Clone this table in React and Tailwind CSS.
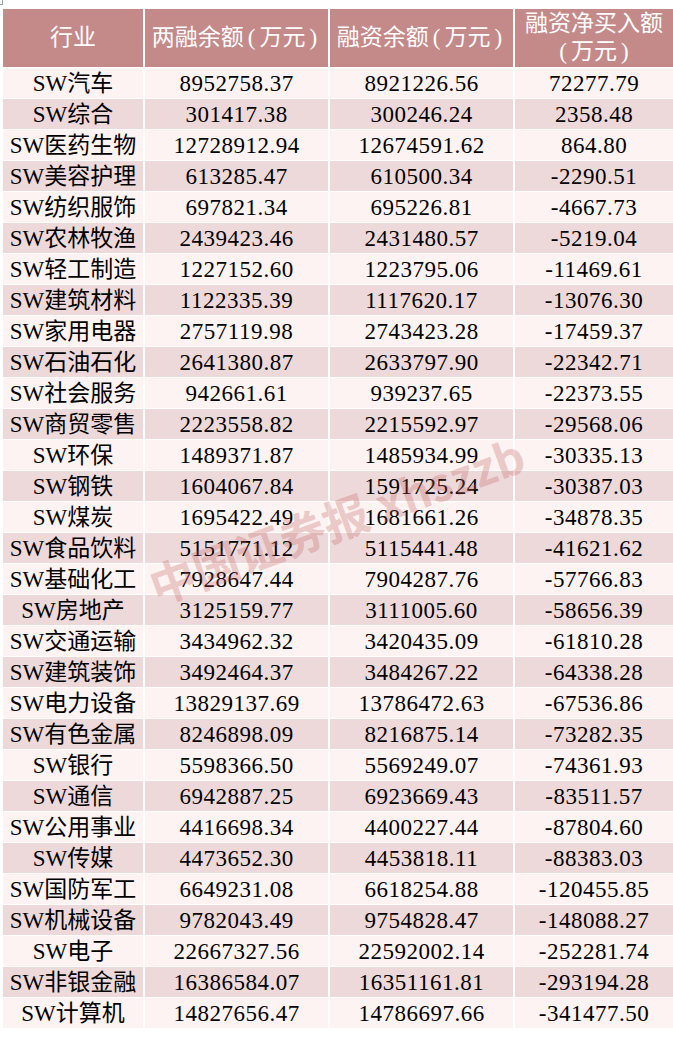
import React from "react";

const rows = [
  ["SW汽车", "8952758.37", "8921226.56", "72277.79"],
  ["SW综合", "301417.38", "300246.24", "2358.48"],
  ["SW医药生物", "12728912.94", "12674591.62", "864.80"],
  ["SW美容护理", "613285.47", "610500.34", "-2290.51"],
  ["SW纺织服饰", "697821.34", "695226.81", "-4667.73"],
  ["SW农林牧渔", "2439423.46", "2431480.57", "-5219.04"],
  ["SW轻工制造", "1227152.60", "1223795.06", "-11469.61"],
  ["SW建筑材料", "1122335.39", "1117620.17", "-13076.30"],
  ["SW家用电器", "2757119.98", "2743423.28", "-17459.37"],
  ["SW石油石化", "2641380.87", "2633797.90", "-22342.71"],
  ["SW社会服务", "942661.61", "939237.65", "-22373.55"],
  ["SW商贸零售", "2223558.82", "2215592.97", "-29568.06"],
  ["SW环保", "1489371.87", "1485934.99", "-30335.13"],
  ["SW钢铁", "1604067.84", "1591725.24", "-30387.03"],
  ["SW煤炭", "1695422.49", "1681661.26", "-34878.35"],
  ["SW食品饮料", "5151771.12", "5115441.48", "-41621.62"],
  ["SW基础化工", "7928647.44", "7904287.76", "-57766.83"],
  ["SW房地产", "3125159.77", "3111005.60", "-58656.39"],
  ["SW交通运输", "3434962.32", "3420435.09", "-61810.28"],
  ["SW建筑装饰", "3492464.37", "3484267.22", "-64338.28"],
  ["SW电力设备", "13829137.69", "13786472.63", "-67536.86"],
  ["SW有色金属", "8246898.09", "8216875.14", "-73282.35"],
  ["SW银行", "5598366.50", "5569249.07", "-74361.93"],
  ["SW通信", "6942887.25", "6923669.43", "-83511.57"],
  ["SW公用事业", "4416698.34", "4400227.44", "-87804.60"],
  ["SW传媒", "4473652.30", "4453818.11", "-88383.03"],
  ["SW国防军工", "6649231.08", "6618254.88", "-120455.85"],
  ["SW机械设备", "9782043.49", "9754828.47", "-148088.27"],
  ["SW电子", "22667327.56", "22592002.14", "-252281.74"],
  ["SW非银金融", "16386584.07", "16351161.81", "-293194.28"],
  ["SW计算机", "14827656.47", "14786697.66", "-341477.50"],
];

function Unit() {
  return (
    <>
      <span className="mx-[4px]">(</span>万元<span className="mx-[4px]">)</span>
    </>
  );
}

export default function App() {
  return (
    <div className="relative w-[673px] h-[1042px] bg-white overflow-hidden font-['Liberation_Serif','Noto_Sans_CJK_SC',serif] text-black">
      <div className="absolute left-0 top-0 w-[3px] h-[5px] border-r border-b border-gray-400" />
      <div className="ml-[3px] mt-[9px] grid grid-cols-[140px_183px_183px_158px] gap-x-[2px] gap-y-px">
        <div className="h-[58px] bg-[#c48a8a] text-white text-[23px] flex items-center justify-center whitespace-nowrap">
          行业
        </div>
        <div className="h-[58px] bg-[#c48a8a] text-white text-[23px] flex items-center justify-center whitespace-nowrap">
          两融余额<Unit />
        </div>
        <div className="h-[58px] bg-[#c48a8a] text-white text-[23px] flex items-center justify-center whitespace-nowrap">
          融资余额<Unit />
        </div>
        <div className="h-[58px] bg-[#c48a8a] text-white text-[23px] leading-[28px] flex flex-col items-center justify-center whitespace-nowrap">
          <span>融资净买入额</span>
          <span>
            <Unit />
          </span>
        </div>
        {rows.map((r, i) =>
          r.map((c, j) => (
            <div
              key={i + "-" + j}
              className={
                (i % 2 === 0 ? "bg-[#fdf3f2] " : "bg-[#eed9da] ") +
                "h-[30px] flex items-center justify-center text-[23px] leading-none whitespace-nowrap " +
                (j === 0 ? "" : "tracking-[0.5px]")
              }
            >
              {c}
            </div>
          ))
        )}
      </div>
      <div className="pointer-events-none absolute left-[336px] top-[519px] -translate-x-1/2 -translate-y-1/2 -rotate-[20deg] whitespace-nowrap font-['Noto_Sans_CJK_SC',sans-serif] font-bold text-[46px] leading-none text-[rgba(192,96,96,0.3)]">
        中国证券报 xhszzb
      </div>
    </div>
  );
}
